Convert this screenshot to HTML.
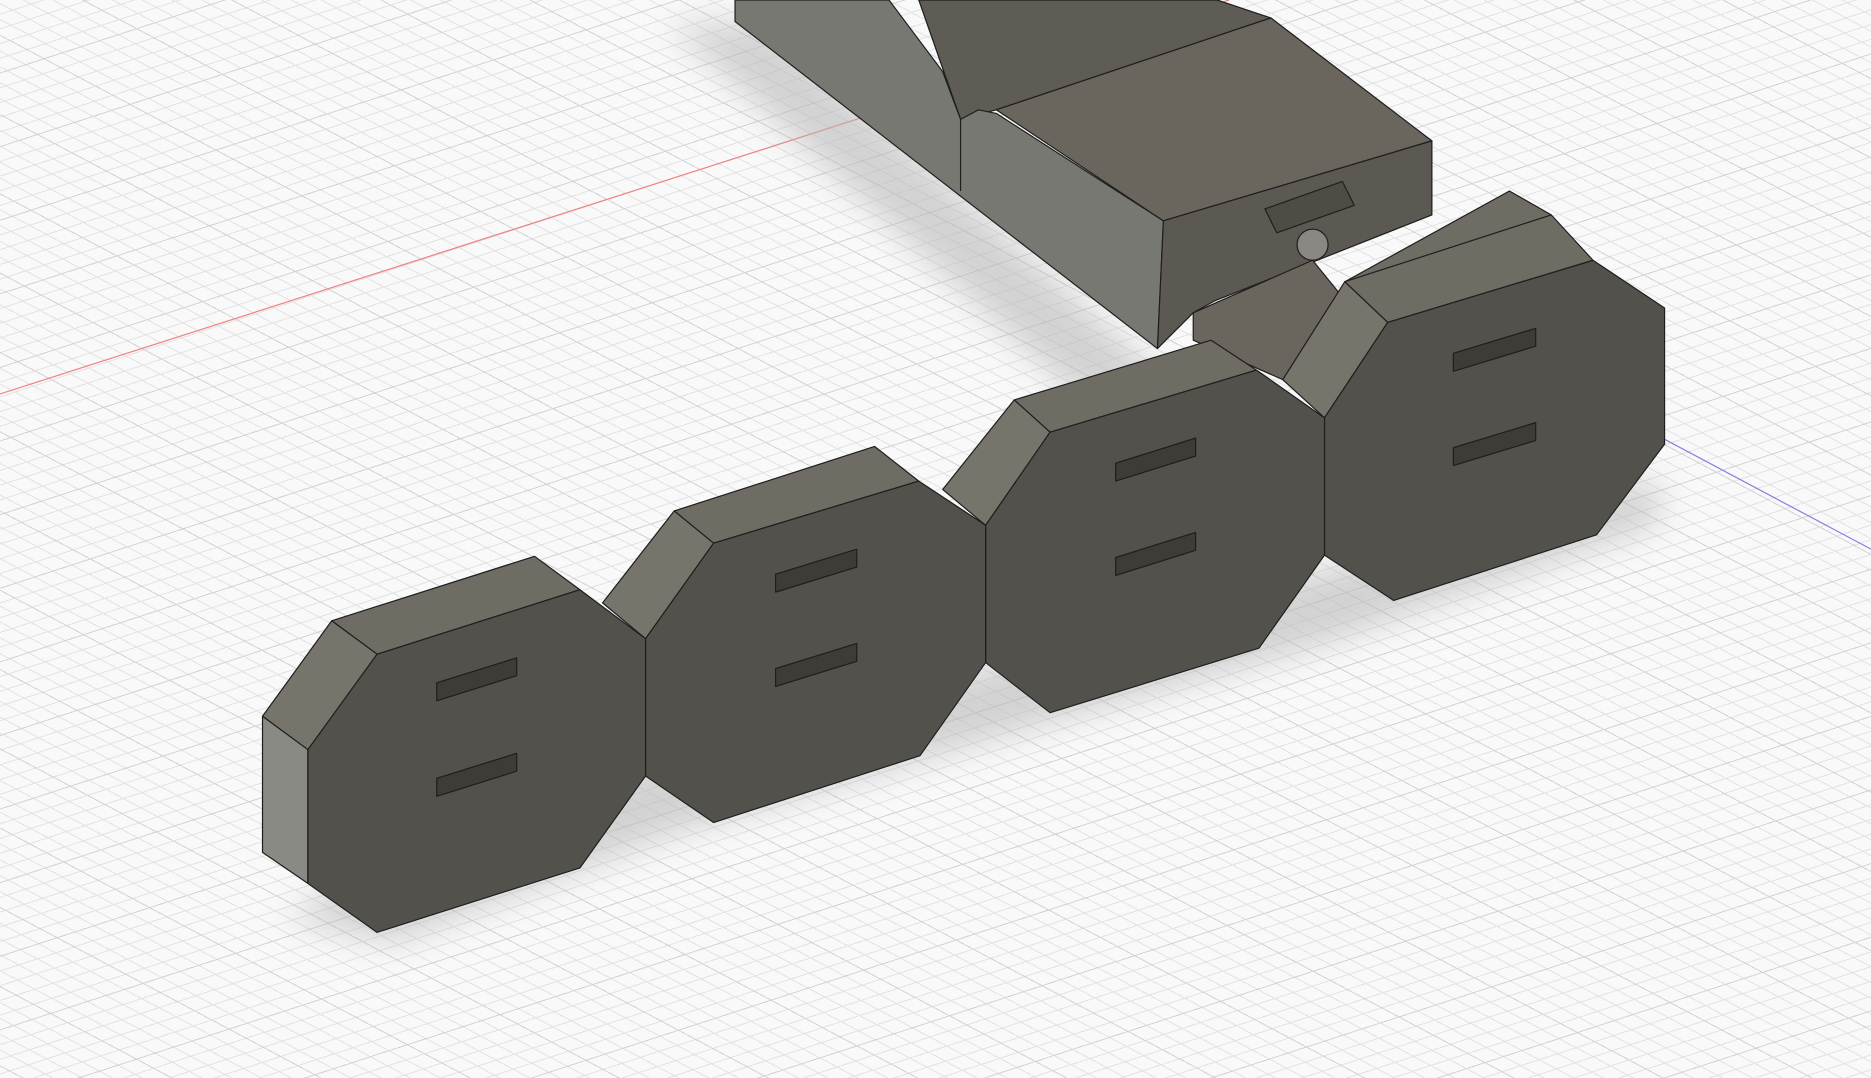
<!DOCTYPE html>
<html><head><meta charset="utf-8"><style>
html,body{margin:0;padding:0;}
body{width:1871px;height:1078px;overflow:hidden;background-color:#f9f9f9;
background-image:
repeating-linear-gradient(162deg, rgba(0,0,0,0) 0px, rgba(0,0,0,0) 69px, #d2d2d2 69px, #d2d2d2 70px),
repeating-linear-gradient(208deg, rgba(0,0,0,0) 0px, rgba(0,0,0,0) 69px, #d2d2d2 69px, #d2d2d2 70px),
repeating-linear-gradient(162deg, rgba(0,0,0,0) 0px, rgba(0,0,0,0) 13px, #e2e2e2 13px, #e2e2e2 14px),
repeating-linear-gradient(208deg, rgba(0,0,0,0) 0px, rgba(0,0,0,0) 13px, #e2e2e2 13px, #e2e2e2 14px);}
svg{position:absolute;left:0;top:0;}
</style></head><body>
<svg width="1871" height="1078" viewBox="0 0 1568 903" preserveAspectRatio="none">
<defs><filter id="b" x="-20%" y="-20%" width="140%" height="140%"><feGaussianBlur stdDeviation="14"/></filter></defs>
<line x1="0" y1="330" x2="1030" y2="0" stroke="#f08080" stroke-width="1"/>
<line x1="1365" y1="352" x2="1568" y2="460" stroke="#8080e0" stroke-width="1"/>
<g fill="#b8b8b8" opacity="0.6" filter="url(#b)">
<polygon points="560,20 650,20 990,330 900,330"/>
<polygon points="240,770 330,790 560,700 830,620 1110,540 1390,440 1390,400 1100,480 820,560 540,640 300,730"/>
</g>
<g stroke="#1e1e1e" stroke-width="1" stroke-linejoin="round">
<polygon points="770,0 1020,0 1065,15 835,92 805,100" fill="#5f5c55"/>
<polygon points="616,0 745,0 790,60 805,100 820,92 835,95 975,185 970,292 616,18" fill="#787873"/>
<line x1="805" y1="100" x2="805" y2="160"/>
<polygon points="835,92 1065,15 1200,118 975,185" fill="#6a665e"/>
<polygon points="975,185 1200,118 1200,180 1018,252 1000,262 970,292" fill="#5c5952"/>
<polygon points="1060,175 1125,152 1135,172 1070,195" fill="#4f4c46"/>
<circle cx="1100" cy="205" r="13" fill="#8a8882"/>
<polygon points="1000,262 1100,218 1130,255 1075,318 1000,285" fill="#6a665e"/>
<polygon points="1127,236 1265,160 1300,180 1163,270" fill="#6f6c64"/>
<polygon points="1110,350 1163,270 1127,236 1075,318" fill="#77746b"/>
<polygon points="1110,350 1163,270 1335,218 1395,258 1395,372 1338,448 1168,503 1110,465" fill="#53514b"/>
<polygon points="1163,270 1335,218 1300,180 1127,236" fill="#6f6c64"/>
<polygon points="1218,296 1287,275 1287,290 1218,311" fill="#3e3c37"/>
<polygon points="1218,375 1287,354 1287,369 1218,390" fill="#3e3c37"/>
<polygon points="880,362 1053,310 1015,285 850,335" fill="#6f6c64"/>
<polygon points="826,440 880,362 850,335 790,410" fill="#77746b"/>
<polygon points="826,440 880,362 1053,310 1110,350 1110,465 1055,543 880,597 826,555" fill="#53514b"/>
<polygon points="935,388 1002,367 1002,382 935,403" fill="#3e3c37"/>
<polygon points="935,467 1002,446 1002,461 935,482" fill="#3e3c37"/>
<polygon points="598,455 770,403 733,374 565,428" fill="#6f6c64"/>
<polygon points="541,535 598,455 565,428 505,505" fill="#77746b"/>
<polygon points="541,535 598,455 770,403 826,440 826,555 771,633 598,689 541,650" fill="#53514b"/>
<polygon points="650,481 718,460 718,475 650,496" fill="#3e3c37"/>
<polygon points="650,560 718,539 718,554 650,575" fill="#3e3c37"/>
<polygon points="316,548 486,494 448,466 278,520" fill="#6f6c64"/>
<polygon points="258,628 316,548 278,520 220,600" fill="#77746b"/>
<polygon points="220,600 258,628 258,740 220,714" fill="#8a8a85"/>
<polygon points="258,628 316,548 486,494 541,535 541,650 486,727 316,781 258,740" fill="#53514b"/>
<polygon points="366,572 433,551 433,566 366,587" fill="#3e3c37"/>
<polygon points="366,652 433,631 433,646 366,667" fill="#3e3c37"/>
</g>
</svg>
</body></html>
